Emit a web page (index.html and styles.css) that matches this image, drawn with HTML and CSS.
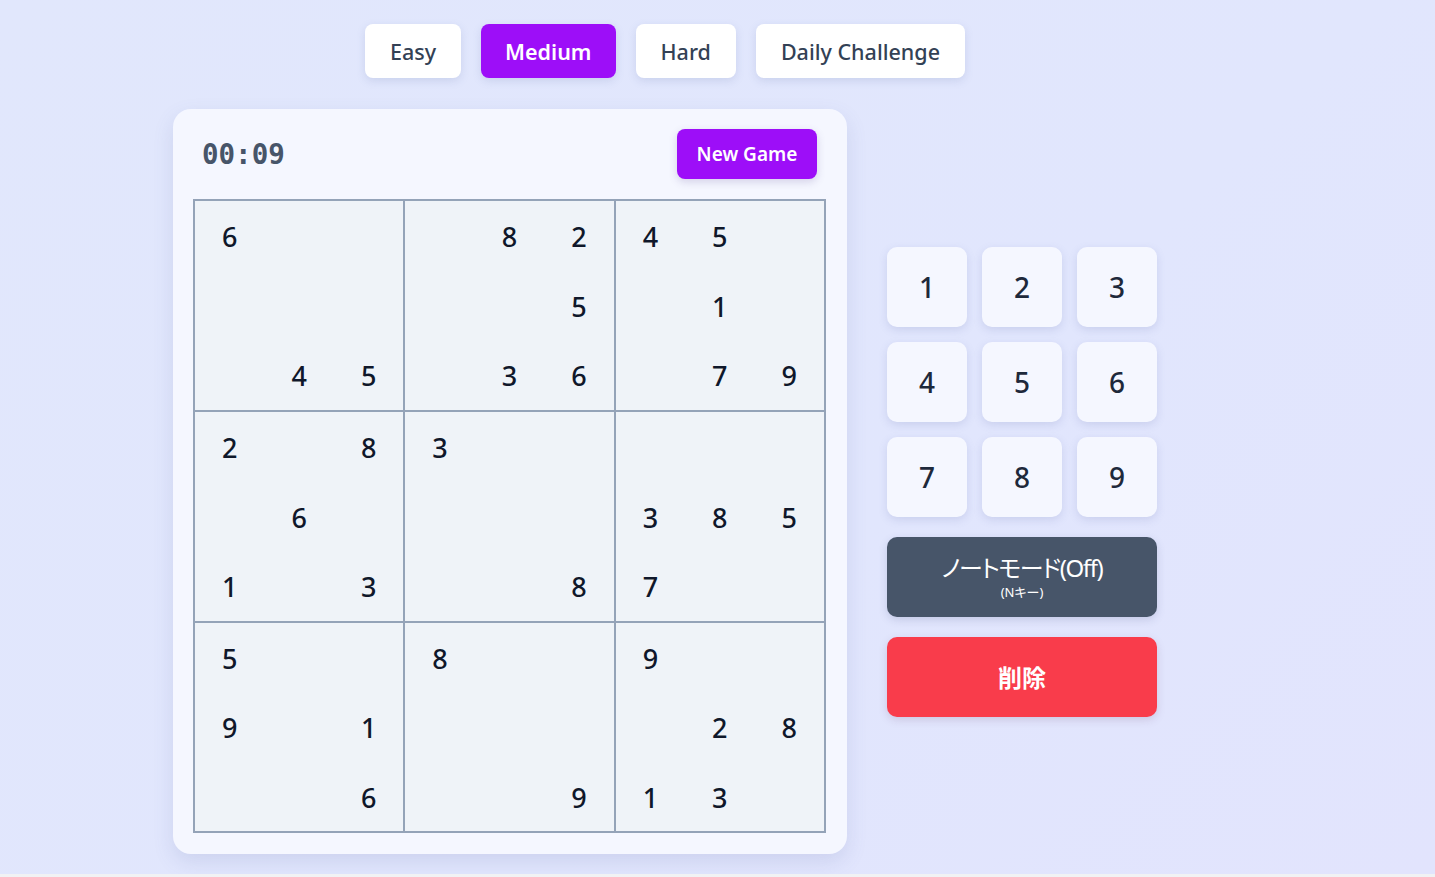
FILE: index.html
```html
<!DOCTYPE html>
<html lang="ja">
<head>
<meta charset="utf-8">
<title>Sudoku</title>
<link rel="stylesheet" href="styles.css">
</head>
<body>
<div class="app">
  <div class="difficulty">
    <button class="diff">Easy</button>
    <button class="diff active">Medium</button>
    <button class="diff">Hard</button>
    <button class="diff">Daily Challenge</button>
  </div>
  <div class="main">
    <div class="card">
      <div class="card-head">
        <span class="timer">00:09</span>
        <button class="new-game">New Game</button>
      </div>
      <div class="board">
        <div class="box"><div class="cell">6</div><div class="cell"></div><div class="cell"></div><div class="cell"></div><div class="cell"></div><div class="cell"></div><div class="cell"></div><div class="cell">4</div><div class="cell">5</div></div>
        <div class="box"><div class="cell"></div><div class="cell">8</div><div class="cell">2</div><div class="cell"></div><div class="cell"></div><div class="cell">5</div><div class="cell"></div><div class="cell">3</div><div class="cell">6</div></div>
        <div class="box"><div class="cell">4</div><div class="cell">5</div><div class="cell"></div><div class="cell"></div><div class="cell">1</div><div class="cell"></div><div class="cell"></div><div class="cell">7</div><div class="cell">9</div></div>
        <div class="box"><div class="cell">2</div><div class="cell"></div><div class="cell">8</div><div class="cell"></div><div class="cell">6</div><div class="cell"></div><div class="cell">1</div><div class="cell"></div><div class="cell">3</div></div>
        <div class="box"><div class="cell">3</div><div class="cell"></div><div class="cell"></div><div class="cell"></div><div class="cell"></div><div class="cell"></div><div class="cell"></div><div class="cell"></div><div class="cell">8</div></div>
        <div class="box"><div class="cell"></div><div class="cell"></div><div class="cell"></div><div class="cell">3</div><div class="cell">8</div><div class="cell">5</div><div class="cell">7</div><div class="cell"></div><div class="cell"></div></div>
        <div class="box"><div class="cell">5</div><div class="cell"></div><div class="cell"></div><div class="cell">9</div><div class="cell"></div><div class="cell">1</div><div class="cell"></div><div class="cell"></div><div class="cell">6</div></div>
        <div class="box"><div class="cell">8</div><div class="cell"></div><div class="cell"></div><div class="cell"></div><div class="cell"></div><div class="cell"></div><div class="cell"></div><div class="cell"></div><div class="cell">9</div></div>
        <div class="box"><div class="cell">9</div><div class="cell"></div><div class="cell"></div><div class="cell"></div><div class="cell">2</div><div class="cell">8</div><div class="cell">1</div><div class="cell">3</div><div class="cell"></div></div>
      </div>
    </div>
    <div class="controls">
      <div class="keypad">
        <button class="key">1</button><button class="key">2</button><button class="key">3</button>
        <button class="key">4</button><button class="key">5</button><button class="key">6</button>
        <button class="key">7</button><button class="key">8</button><button class="key">9</button>
      </div>
      <button class="note-btn"><span class="note-main">ノートモード(Off)</span><span class="note-sub">(Nキー)</span></button>
      <button class="delete-btn">削除</button>
    </div>
  </div>
</div>
</body>
</html>
```
FILE: styles.css
```css
html {
  background: #f1f2f4;
}
body {
  margin: 0;
  height: 874px;
  background: linear-gradient(135deg, #e1e7fc 0%, #e1e6fd 60%, #e2e4fd 100%);
  font-family: "Noto Sans", "Open Sans", "Noto Sans CJK JP", sans-serif;
  color: #1e293b;
  overflow: hidden;
}
button {
  font-family: inherit;
  border: none;
  cursor: pointer;
}
.app {
  width: 984px;
  margin-left: 173px;
  padding-top: 24px;
  display: flex;
  flex-direction: column;
  align-items: center;
}
.difficulty {
  display: flex;
  gap: 20px;
  height: 54px;
}
.diff {
  height: 54px;
  padding: 0 25px;
  border-radius: 8px;
  background: #ffffff;
  color: #334155;
  font-size: 21.5px;
  font-weight: 500;
  box-shadow: 0 3px 8px rgba(100, 116, 170, 0.18);
}
.diff.active {
  background: #9d0ef8;
  color: #ffffff;
  font-weight: 600;
  padding: 0 24px;
}
.main {
  margin-top: 31px;
  display: flex;
  align-items: center;
  gap: 40px;
  width: 100%;
}
.card {
  width: 674px;
  box-sizing: border-box;
  padding: 20px 21px 21px 20px;
  background: #f5f7ff;
  border-radius: 18px;
  box-shadow: 0 8px 20px rgba(90, 100, 160, 0.15);
}
.card-head {
  display: flex;
  justify-content: space-between;
  align-items: center;
  padding: 0 9px 0 9px;
  height: 50px;
  margin-bottom: 20px;
}
.timer {
  font-family: "DejaVu Sans Mono", "Liberation Mono", monospace;
  font-size: 27.5px;
  font-weight: bold;
  color: #475569;
}
.new-game {
  width: 140px;
  height: 50px;
  border-radius: 8px;
  background: #9d0ef8;
  color: #ffffff;
  font-size: 19px;
  font-weight: 600;
  box-shadow: 0 3px 8px rgba(80, 60, 140, 0.2);
}
.board {
  display: grid;
  grid-template-columns: repeat(3, 1fr);
  border: 1px solid #94a3b8;
  background: #eff3f8;
  width: 633px;
  box-sizing: border-box;
}
.box {
  border: 1px solid #94a3b8;
  display: grid;
  grid-template-columns: repeat(3, 1fr);
  grid-template-rows: repeat(3, 69.6px);
}
.cell {
  display: flex;
  align-items: center;
  justify-content: center;
  font-size: 27px;
  font-weight: 500;
  color: #0f172a;
  padding-top: 2px;
}
.controls {
  width: 270px;
  display: flex;
  flex-direction: column;
  gap: 20px;
}
.keypad {
  display: grid;
  grid-template-columns: repeat(3, 80px);
  grid-auto-rows: 80px;
  gap: 15px;
}
.key {
  background: #f5f7ff;
  border-radius: 10px;
  font-size: 28px;
  font-weight: 500;
  color: #1e293b;
  box-shadow: 0 3px 8px rgba(100, 110, 170, 0.18);
}
.note-btn {
  height: 80px;
  border-radius: 10px;
  background: #475569;
  color: #ffffff;
  display: flex;
  flex-direction: column;
  align-items: center;
  justify-content: center;
  box-shadow: 0 3px 8px rgba(80, 90, 140, 0.2);
}
.note-main {
  font-size: 24px;
  line-height: 30px;
  font-feature-settings: "palt";
  letter-spacing: -1.4px;
}
.note-sub {
  font-size: 13px;
  line-height: 18px;
  font-feature-settings: "palt";
}
.delete-btn {
  height: 80px;
  border-radius: 10px;
  background: #f93c4b;
  color: #ffffff;
  font-size: 24px;
  font-weight: 700;
  box-shadow: 0 3px 8px rgba(120, 80, 120, 0.2);
}
```
